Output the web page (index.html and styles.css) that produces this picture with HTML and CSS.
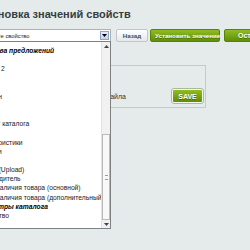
FILE: index.html
```html
<!DOCTYPE html>
<html lang="ru">
<head>
    <meta charset="UTF-8">
    <meta name="viewport" content="width=device-width, initial-scale=1.0">
    <title>Установка значений свойств</title>
    <link rel="stylesheet" href="styles.css">
</head>
<body>
    <div class="page">
        <!-- Заголовок -->
        <h1 class="title">Установка значений свойств</h1>

        <!-- Панель действий -->
        <div class="toolbar">
            <div class="picker">
                <div class="select">
                    <span class="select-text">Выберите свойство</span>
                    <span class="select-arrow">
                        <svg width="5" height="3" viewBox="0 0 5 3"><path d="M0 0h5L2.5 3z" fill="#000"/></svg>
                    </span>
                </div>

                <!-- Открытый список свойств -->
                <div class="options">
                    <ul class="option-list">
                        <li class="group">Свойства предложений</li>
                        <li>Цвет</li>
                        <li>Вариант 2</li>
                        <li>Вес</li>
                        <li>Цена</li>
                        <li>Капюшон</li>
                        <li>Тип</li>
                        <li>Код</li>
                        <li>Элемент каталога</li>
                        <li>Вид</li>
                        <li>Характеристики</li>
                        <li>Гарантии</li>
                        <li>Хит</li>
                        <li>Файлов (Upload)</li>
                        <li>Производитель</li>
                        <li>Статус наличия товара (основной)</li>
                        <li>Статус наличия товара (дополнительный)</li>
                        <li class="group">Параметры каталога</li>
                        <li>Количество</li>
                    </ul>
                    <div class="scrollbar">
                        <span class="scroll-arrow">
                            <svg width="5" height="3" viewBox="0 0 5 3"><path d="M0 3h5L2.5 0z" fill="#444"/></svg>
                        </span>
                        <div class="scroll-track">
                            <div class="scroll-thumb"><span class="grip"></span></div>
                        </div>
                        <span class="scroll-arrow">
                            <svg width="5" height="3" viewBox="0 0 5 3"><path d="M0 0h5L2.5 3z" fill="#444"/></svg>
                        </span>
                    </div>
                </div>
            </div>
            <button class="btn btn-light">Назад</button>
            <button class="btn btn-green">Установить значение</button>
            <button class="btn btn-green btn-wide">Оставить без изменений</button>
        </div>

        <!-- Блок загрузки -->
        <div class="panel">
            <div class="panel-row">
                <span class="panel-label">Загрузить значения из файла</span>
                <button class="btn-save">SAVE</button>
            </div>
        </div>
    </div>
</body>
</html>
```

FILE: styles.css
```css
/* Основа */
html, body {
    height: 100%;
}
body {
    margin: 0;
    overflow: hidden;
    background: #e5ebeb;
    font-family: "Liberation Sans", Arial, sans-serif;
}
.page {
    margin-left: -30px;
    width: 420px;
    min-height: 250px;
}
.title {
    margin: 0;
    padding: 7px 0 0 4px;
    font-size: 11px;
    line-height: 14px;
    font-weight: bold;
    color: #383d40;
}

/* Панель действий */
.toolbar {
    display: flex;
    margin-top: 8px;
    height: 13px;
}
.toolbar > * {
    flex-shrink: 0;
}
.picker {
    position: relative;
    width: 141px;
    margin-right: 5px;
}
.select {
    display: flex;
    align-items: center;
    height: 13px;
    box-sizing: border-box;
    background: #fff;
    border: 1px solid #a9b3b8;
}
.select-text {
    flex: 1;
    padding-left: 6px;
    font-size: 5.8px;
    color: #222;
}
.select-arrow {
    display: flex;
    align-items: center;
    justify-content: center;
    width: 9px;
    height: 9px;
    margin-right: 1px;
    background: linear-gradient(#e6eef8, #c4d4e8);
    border: 1px solid #8ea6c6;
    box-sizing: border-box;
}

/* Выпадающий список */
.options {
    position: absolute;
    top: 12px;
    left: 0;
    z-index: 2;
    width: 141px;
    height: 188px;
    box-sizing: border-box;
    display: flex;
    background: #fff;
    border: 1px solid #7c8185;
}
.option-list {
    flex: 1;
    margin: 0;
    padding: 4px 0 0;
    list-style: none;
    overflow: hidden;
}
.option-list li {
    padding-left: 2px;
    font-size: 6.7px;
    line-height: 9.15px;
    white-space: nowrap;
    color: #1a1a1a;
}
.option-list li.group {
    font-weight: bold;
    font-style: italic;
    color: #000;
}
.scrollbar {
    width: 8px;
    display: flex;
    flex-direction: column;
    background: #f1f1f1;
    border-left: 1px solid #e2e2e2;
}
.scroll-arrow {
    height: 8px;
    display: flex;
    align-items: center;
    justify-content: center;
}
.scroll-track {
    flex: 1;
    display: flex;
    flex-direction: column;
    justify-content: flex-end;
}
.scroll-thumb {
    height: 86px;
    box-sizing: border-box;
    display: flex;
    align-items: center;
    justify-content: center;
    background: #f8f8f8;
    border: 1px solid #b9b9b9;
}
.grip {
    width: 3px;
    height: 3px;
    border-top: 1px solid #999;
    border-bottom: 1px solid #999;
}

/* Кнопки */
.btn {
    height: 13px;
    padding: 0 4px;
    margin-right: 2px;
    font-family: inherit;
    font-size: 6.2px;
    font-weight: bold;
    white-space: nowrap;
    border-radius: 2px;
    cursor: pointer;
}
.btn-light {
    width: 32px;
    color: #3f4c54;
    background: linear-gradient(#fff, #e4e8ea);
    border: 1px solid #c0c7cb;
}
.btn-green {
    width: 70px;
    margin-right: 4px;
    color: #fff;
    text-shadow: 0 1px 0 #4a6f00;
    background: linear-gradient(#90bd24, #5f8e06);
    border: 1px solid #58800a;
}
.btn-wide {
    width: auto;
    padding: 0 8px 0 13px;
    font-size: 7px;
    text-align: left;
}

/* Блок загрузки */
.panel {
    margin-top: 23px;
    width: 236px;
    height: 43px;
    box-sizing: border-box;
    display: flex;
    align-items: flex-end;
    padding: 0 2px 4px 8px;
    border: 1px solid #c3cacb;
}
.panel-row {
    flex: 1;
    display: flex;
    align-items: center;
    gap: 46px;
}
.panel-label {
    flex: 1;
    text-align: right;
    font-size: 7px;
    color: #333;
}
.btn-save {
    width: 31px;
    height: 14px;
    padding: 0;
    font-family: inherit;
    font-size: 7px;
    font-weight: bold;
    color: #fff;
    text-shadow: 0 1px 0 #466a00;
    background: linear-gradient(#8fbd22, #5e8d06);
    border: 1px solid #f4f8ee;
    outline: 1px solid #a9b99a;
    border-radius: 2px;
}
```
